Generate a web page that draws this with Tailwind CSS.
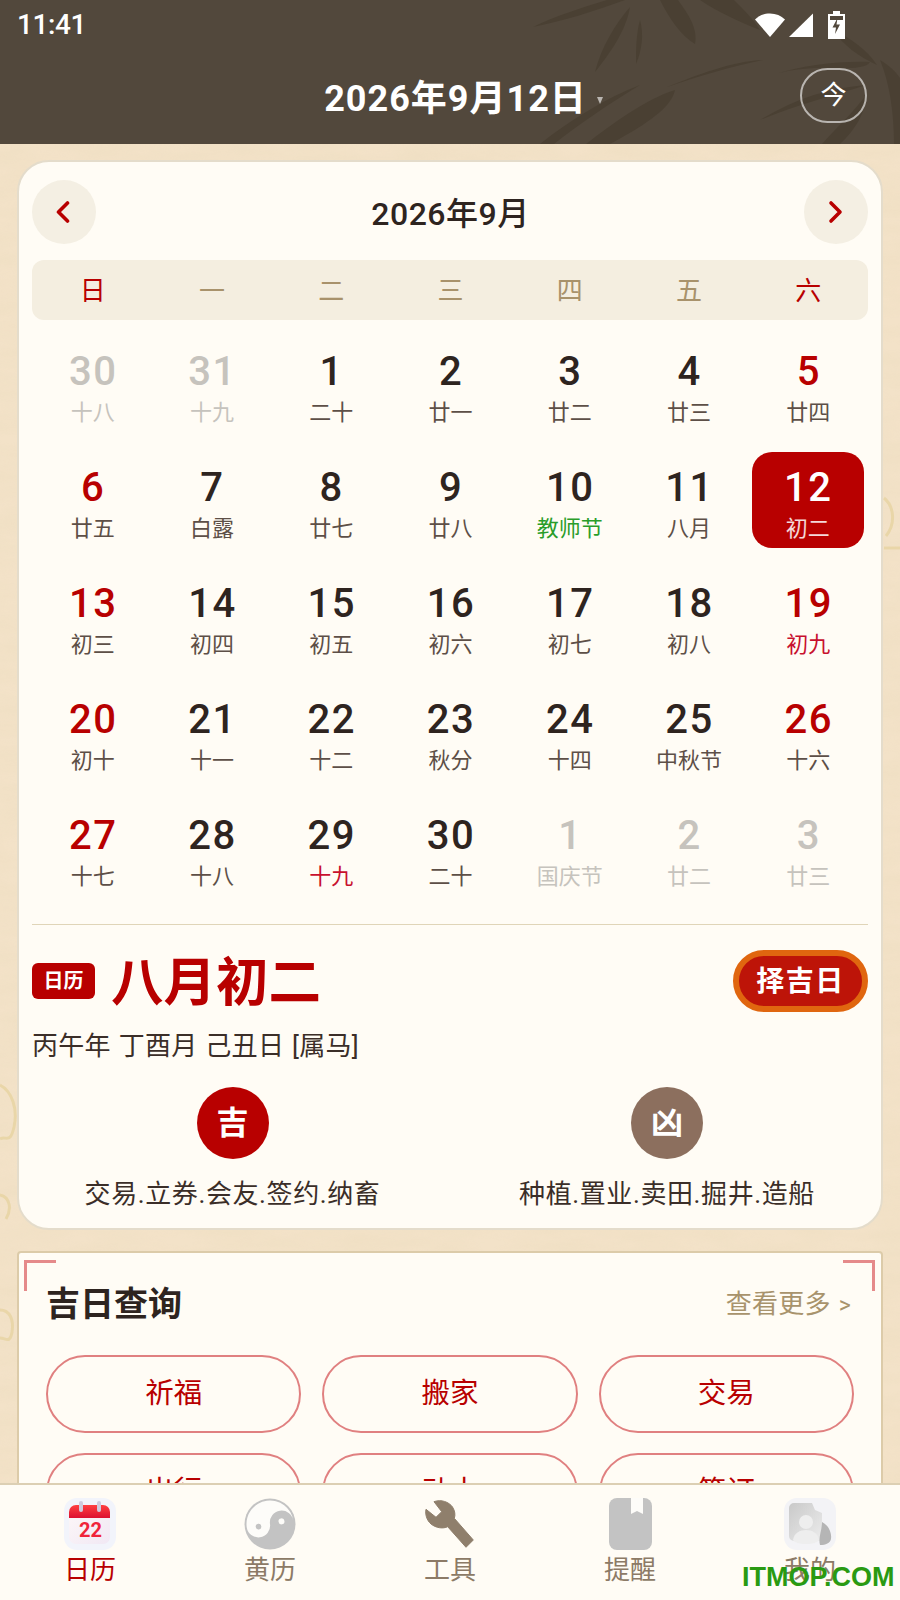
<!DOCTYPE html>
<html lang="zh">
<head>
  <meta charset="UTF-8" />
  <meta name="viewport" content="width=device-width, initial-scale=1.0"/>
  <title>日历</title>
  <script src="https://cdn.jsdelivr.net/npm/@tailwindcss/browser@4"></script>
</head>
<body class="font-['Roboto','Noto_Sans_CJK_SC',sans-serif]">
  <div class="relative w-[900px] h-[1600px] overflow-hidden bg-[#f3e2c8]">

    <!-- paper texture behind the page -->
    <svg class="absolute inset-0" width="900" height="1600" viewBox="0 0 900 1600">
      <filter id="paper"><feTurbulence type="fractalNoise" baseFrequency="0.015 0.06" numOctaves="4" seed="7"/><feColorMatrix values="0 0 0 0 0.84  0 0 0 0 0.72  0 0 0 0 0.52  0 0 0 1.100 -0.25"/></filter>
      <rect width="900" height="1600" filter="url(#paper)" opacity="0.6"/>
      <g fill="none" stroke="#e6d29c" stroke-width="3" opacity="0.7">
        <path d="M0 1085c12 6 18 24 14 42s-8 8-14 12"/>
        <path d="M0 1195c10 2 12 14 6 24"/>
        <path d="M0 1310c10 0 14 10 12 22s-6 6-12 6"/>
        <path d="M884 498c10 8 12 26 2 38"/>
        <path d="M884 548h16"/>
      </g>
    </svg>

    <!-- header -->
    <header class="relative h-[144px] bg-[#52483c] overflow-hidden">
      <svg class="absolute inset-0" width="900" height="144" viewBox="0 0 900 144">
        <g fill="#4a4033">
          <path d="M660 0h18c10 14 20 28 17 44-14-8-26-26-35-44z"/>
          <path d="M630 7c-4 24-20 46-35 65 6-24 20-48 35-65z"/>
          <path d="M533 27c30-6 62-16 92-27h-18c-26 8-52 16-74 27z"/>
          <path d="M640 20c4 14 2 30-4 44 0-14 0-30 4-44z"/>
          <path d="M667 87c30-12 66-26 96-27-30 6-64 16-96 27z"/>
          <path d="M675 90c-4 20-36 38-65 54h-24c26-20 58-44 89-54z"/>
          <path d="M540 144c30-24 66-46 100-59-30 18-62 40-86 59z"/>
          <path d="M773 75c30-10 66-14 97-13-4 8-30 6-50 6-16 0-32 2-47 7z"/>
          <path d="M760 120c36-22 70-32 106-35-30 10-70 20-106 35z"/>
          <path d="M700 0h34c10 10 20 20 26 30-20-8-42-18-60-30z"/>
          <path d="M833 30c18 8 34 20 44 35-18-8-34-20-44-35z"/>
          <path d="M880 60c10 6 16 12 20 18v66h-6c0-30-4-60-14-84z"/>
          <path d="M866 95c0 18-12 36-26 49h-18c14-16 32-32 44-49z"/>
        </g>
      </svg>

      <!-- status bar -->
      <div class="relative flex items-center justify-between h-[50px] pl-[17px] pr-[55px] text-white">
        <span class="text-[28px] font-medium tracking-[-0.4px]">11:41</span>
        <div class="flex items-center">
          <svg width="30" height="26" viewBox="0 0 30 26" fill="#fff"><path d="M0 7.500C4 3.500 9 1.500 15 1.500s11 2 15 6L15 25z"/></svg>
          <svg class="ml-[4px]" width="25" height="26" viewBox="0 0 25 26" fill="#fff"><path d="M24 1.500V25H0z"/></svg>
          <svg class="ml-[14px]" width="17" height="28" viewBox="0 0 17 28"><path fill="#fff" d="M5 0h7v3h5v25H0V3h5z"/><path fill="#52483c" d="M2 5h13v4H2z"/><path fill="#52483c" d="M9.500 7 4.500 16.500h3.500L7 23l5-9.500H8.500z"/></svg>
        </div>
      </div>

      <!-- date title -->
      <div class="relative flex items-center justify-center mt-[21px] h-[56px] text-white">
        <span class="text-[36px] font-bold tracking-[1px] ml-[27px]">2026年9月12日</span>
        <span class="ml-[10px] mt-[2px] w-0 h-0 border-x-[3px] border-x-transparent border-t-[7px] border-t-white/60"></span>
        <span class="absolute right-[33px] top-[-3px] w-[67px] h-[55px] rounded-full border-2 border-white/60 flex items-center justify-center text-[26px]">今</span>
      </div>
    </header>

    <main class="relative px-[17px]">
      <!-- calendar card -->
      <section class="mt-[16px] h-[1070px] rounded-[32px] bg-[#fffcf5] border-2 border-[#e4dccb] px-[13px] pt-[18px]">
        <div class="flex items-center justify-between">
          <button class="w-[64px] h-[64px] rounded-full bg-[#f4efe3] flex items-center justify-center">
            <svg width="16" height="24" viewBox="0 0 16 24" fill="none" stroke="#b80000" stroke-width="3.600" stroke-linecap="round" stroke-linejoin="round"><path d="M11.500 3 2.500 12l9 9"/></svg>
          </button>
          <h2 class="pt-[4px] ml-[1px] text-[32px] font-medium text-[#2e241f] tracking-[0.5px]">2026年9月</h2>
          <button class="w-[64px] h-[64px] rounded-full bg-[#f4efe3] flex items-center justify-center">
            <svg width="16" height="24" viewBox="0 0 16 24" fill="none" stroke="#b80000" stroke-width="3.600" stroke-linecap="round" stroke-linejoin="round"><path d="m3 3 9 9-9 9"/></svg>
          </button>
        </div>

        <div class="grid grid-cols-7 h-[60px] mt-[16px] pt-[2px] pl-[1px] items-center text-center rounded-[12px] bg-[#f4eee0] text-[26px] text-[#a8926b]">
          <span class="text-[#b80000]">日</span><span>一</span><span>二</span><span>三</span><span>四</span><span>五</span><span class="text-[#b80000]">六</span>
        </div>

        <div class="grid grid-cols-7 auto-rows-[96px] gap-y-[20px] mt-[16px] pl-[1px] text-center text-[#2e241f]">
          <div class="flex flex-col items-center pt-[12px] text-[#c6c3bd]"><b class="ml-[1px] text-[40px] leading-[48px] font-medium tracking-[1.500px]">30</b><span class="mt-[2px] text-[22px] leading-[30px]">十八</span></div>
          <div class="flex flex-col items-center pt-[12px] text-[#c6c3bd]"><b class="ml-[1px] text-[40px] leading-[48px] font-medium tracking-[1.500px]">31</b><span class="mt-[2px] text-[22px] leading-[30px]">十九</span></div>
          <div class="flex flex-col items-center pt-[12px]"><b class="ml-[1px] text-[40px] leading-[48px] font-medium tracking-[1.500px]">1</b><span class="mt-[2px] text-[22px] leading-[30px] text-[#5d4f47]">二十</span></div>
          <div class="flex flex-col items-center pt-[12px]"><b class="ml-[1px] text-[40px] leading-[48px] font-medium tracking-[1.500px]">2</b><span class="mt-[2px] text-[22px] leading-[30px] text-[#5d4f47]">廿一</span></div>
          <div class="flex flex-col items-center pt-[12px]"><b class="ml-[1px] text-[40px] leading-[48px] font-medium tracking-[1.500px]">3</b><span class="mt-[2px] text-[22px] leading-[30px] text-[#5d4f47]">廿二</span></div>
          <div class="flex flex-col items-center pt-[12px]"><b class="ml-[1px] text-[40px] leading-[48px] font-medium tracking-[1.500px]">4</b><span class="mt-[2px] text-[22px] leading-[30px] text-[#5d4f47]">廿三</span></div>
          <div class="flex flex-col items-center pt-[12px]"><b class="ml-[1px] text-[40px] leading-[48px] font-medium tracking-[1.500px] text-[#b80000]">5</b><span class="mt-[2px] text-[22px] leading-[30px] text-[#5d4f47]">廿四</span></div>

          <div class="flex flex-col items-center pt-[12px]"><b class="ml-[1px] text-[40px] leading-[48px] font-medium tracking-[1.500px] text-[#b80000]">6</b><span class="mt-[2px] text-[22px] leading-[30px] text-[#5d4f47]">廿五</span></div>
          <div class="flex flex-col items-center pt-[12px]"><b class="ml-[1px] text-[40px] leading-[48px] font-medium tracking-[1.500px]">7</b><span class="mt-[2px] text-[22px] leading-[30px] text-[#5d4f47]">白露</span></div>
          <div class="flex flex-col items-center pt-[12px]"><b class="ml-[1px] text-[40px] leading-[48px] font-medium tracking-[1.500px]">8</b><span class="mt-[2px] text-[22px] leading-[30px] text-[#5d4f47]">廿七</span></div>
          <div class="flex flex-col items-center pt-[12px]"><b class="ml-[1px] text-[40px] leading-[48px] font-medium tracking-[1.500px]">9</b><span class="mt-[2px] text-[22px] leading-[30px] text-[#5d4f47]">廿八</span></div>
          <div class="flex flex-col items-center pt-[12px]"><b class="ml-[1px] text-[40px] leading-[48px] font-medium tracking-[1.500px]">10</b><span class="mt-[2px] text-[22px] leading-[30px] text-[#2a9d2a]">教师节</span></div>
          <div class="flex flex-col items-center pt-[12px]"><b class="ml-[1px] text-[40px] leading-[48px] font-medium tracking-[1.500px]">11</b><span class="mt-[2px] text-[22px] leading-[30px] text-[#5d4f47]">八月</span></div>
          <div class="flex flex-col items-center pt-[12px] ml-[3px] mr-[4px] rounded-[20px] bg-[#b80000] text-white"><b class="ml-[1px] text-[40px] leading-[48px] font-medium tracking-[1.500px]">12</b><span class="mt-[2px] text-[22px] leading-[30px] text-white/85">初二</span></div>

          <div class="flex flex-col items-center pt-[12px]"><b class="ml-[1px] text-[40px] leading-[48px] font-medium tracking-[1.500px] text-[#b80000]">13</b><span class="mt-[2px] text-[22px] leading-[30px] text-[#5d4f47]">初三</span></div>
          <div class="flex flex-col items-center pt-[12px]"><b class="ml-[1px] text-[40px] leading-[48px] font-medium tracking-[1.500px]">14</b><span class="mt-[2px] text-[22px] leading-[30px] text-[#5d4f47]">初四</span></div>
          <div class="flex flex-col items-center pt-[12px]"><b class="ml-[1px] text-[40px] leading-[48px] font-medium tracking-[1.500px]">15</b><span class="mt-[2px] text-[22px] leading-[30px] text-[#5d4f47]">初五</span></div>
          <div class="flex flex-col items-center pt-[12px]"><b class="ml-[1px] text-[40px] leading-[48px] font-medium tracking-[1.500px]">16</b><span class="mt-[2px] text-[22px] leading-[30px] text-[#5d4f47]">初六</span></div>
          <div class="flex flex-col items-center pt-[12px]"><b class="ml-[1px] text-[40px] leading-[48px] font-medium tracking-[1.500px]">17</b><span class="mt-[2px] text-[22px] leading-[30px] text-[#5d4f47]">初七</span></div>
          <div class="flex flex-col items-center pt-[12px]"><b class="ml-[1px] text-[40px] leading-[48px] font-medium tracking-[1.500px]">18</b><span class="mt-[2px] text-[22px] leading-[30px] text-[#5d4f47]">初八</span></div>
          <div class="flex flex-col items-center pt-[12px]"><b class="ml-[1px] text-[40px] leading-[48px] font-medium tracking-[1.500px] text-[#b80000]">19</b><span class="mt-[2px] text-[22px] leading-[30px] text-[#c8102e]">初九</span></div>

          <div class="flex flex-col items-center pt-[12px]"><b class="ml-[1px] text-[40px] leading-[48px] font-medium tracking-[1.500px] text-[#b80000]">20</b><span class="mt-[2px] text-[22px] leading-[30px] text-[#5d4f47]">初十</span></div>
          <div class="flex flex-col items-center pt-[12px]"><b class="ml-[1px] text-[40px] leading-[48px] font-medium tracking-[1.500px]">21</b><span class="mt-[2px] text-[22px] leading-[30px] text-[#5d4f47]">十一</span></div>
          <div class="flex flex-col items-center pt-[12px]"><b class="ml-[1px] text-[40px] leading-[48px] font-medium tracking-[1.500px]">22</b><span class="mt-[2px] text-[22px] leading-[30px] text-[#5d4f47]">十二</span></div>
          <div class="flex flex-col items-center pt-[12px]"><b class="ml-[1px] text-[40px] leading-[48px] font-medium tracking-[1.500px]">23</b><span class="mt-[2px] text-[22px] leading-[30px] text-[#5d4f47]">秋分</span></div>
          <div class="flex flex-col items-center pt-[12px]"><b class="ml-[1px] text-[40px] leading-[48px] font-medium tracking-[1.500px]">24</b><span class="mt-[2px] text-[22px] leading-[30px] text-[#5d4f47]">十四</span></div>
          <div class="flex flex-col items-center pt-[12px]"><b class="ml-[1px] text-[40px] leading-[48px] font-medium tracking-[1.500px]">25</b><span class="mt-[2px] text-[22px] leading-[30px] text-[#5d4f47]">中秋节</span></div>
          <div class="flex flex-col items-center pt-[12px]"><b class="ml-[1px] text-[40px] leading-[48px] font-medium tracking-[1.500px] text-[#b80000]">26</b><span class="mt-[2px] text-[22px] leading-[30px] text-[#5d4f47]">十六</span></div>

          <div class="flex flex-col items-center pt-[12px]"><b class="ml-[1px] text-[40px] leading-[48px] font-medium tracking-[1.500px] text-[#b80000]">27</b><span class="mt-[2px] text-[22px] leading-[30px] text-[#5d4f47]">十七</span></div>
          <div class="flex flex-col items-center pt-[12px]"><b class="ml-[1px] text-[40px] leading-[48px] font-medium tracking-[1.500px]">28</b><span class="mt-[2px] text-[22px] leading-[30px] text-[#5d4f47]">十八</span></div>
          <div class="flex flex-col items-center pt-[12px]"><b class="ml-[1px] text-[40px] leading-[48px] font-medium tracking-[1.500px]">29</b><span class="mt-[2px] text-[22px] leading-[30px] text-[#c8102e]">十九</span></div>
          <div class="flex flex-col items-center pt-[12px]"><b class="ml-[1px] text-[40px] leading-[48px] font-medium tracking-[1.500px]">30</b><span class="mt-[2px] text-[22px] leading-[30px] text-[#5d4f47]">二十</span></div>
          <div class="flex flex-col items-center pt-[12px] text-[#c6c3bd]"><b class="ml-[1px] text-[40px] leading-[48px] font-medium tracking-[1.500px]">1</b><span class="mt-[2px] text-[22px] leading-[30px]">国庆节</span></div>
          <div class="flex flex-col items-center pt-[12px] text-[#c6c3bd]"><b class="ml-[1px] text-[40px] leading-[48px] font-medium tracking-[1.500px]">2</b><span class="mt-[2px] text-[22px] leading-[30px]">廿二</span></div>
          <div class="flex flex-col items-center pt-[12px] text-[#c6c3bd]"><b class="ml-[1px] text-[40px] leading-[48px] font-medium tracking-[1.500px]">3</b><span class="mt-[2px] text-[22px] leading-[30px]">廿三</span></div>
        </div>

        <div class="mt-[28px] h-[1px] bg-[#e0d5b8]"></div>

        <!-- today's summary -->
        <div class="flex items-center mt-[24px] h-[64px]">
          <span class="w-[63px] h-[36px] mt-[-1px] rounded-[6px] bg-[#b80000] text-white text-[20px] font-bold flex items-center justify-center">日历</span>
          <h3 class="ml-[16px] pt-[4px] text-[52.500px] font-bold text-[#b80000]">八月初二</h3>
          <button class="ml-auto w-[135px] h-[62px] pt-[1px] rounded-full border-[6px] border-[#e0660f] bg-[#bd1408] text-white text-[28px] font-bold tracking-[1.500px]">择吉日</button>
        </div>
        <p class="mt-[15px] text-[26px] leading-[36px] tracking-[0.3px] [word-spacing:1px] text-[#3b2e28]">丙午年 丁酉月 己丑日 [属马]</p>
        <div class="grid grid-cols-2 mt-[23px]">
          <div class="flex flex-col items-center mr-[17px]">
            <span class="w-[72px] h-[72px] rounded-full bg-[#b80000] text-white text-[32px] font-bold flex items-center justify-center">吉</span>
            <span class="mt-[17px] text-[26px] leading-[36px] tracking-[0.6px] whitespace-nowrap text-[#3b2e28]">交易.立券.会友.签约.纳畜</span>
          </div>
          <div class="flex flex-col items-center ml-[16px]">
            <span class="w-[72px] h-[72px] rounded-full bg-[#8c6f5e] text-white text-[32px] font-bold flex items-center justify-center">凶</span>
            <span class="mt-[17px] text-[26px] leading-[36px] tracking-[0.6px] whitespace-nowrap text-[#3b2e28]">种植.置业.卖田.掘井.造船</span>
          </div>
        </div>
      </section>

      <!-- auspicious day lookup -->
      <section class="relative mt-[21px] h-[400px] rounded-[4px] bg-[#fffcf5] border-2 border-[#dccba9] px-[27px]">
        <span class="absolute left-[5px] top-[7px] w-[32px] h-[31px] border-l-[3px] border-t-[3px] border-[#e58a8a]"></span>
        <span class="absolute right-[6px] top-[7px] w-[32px] h-[31px] border-r-[3px] border-t-[3px] border-[#e58a8a]"></span>
        <div class="flex items-center justify-between pt-[26px] h-[77px] pr-[3px]">
          <h3 class="text-[34px] font-bold text-[#2e241f]">吉日查询</h3>
          <span class="text-[26px] text-[#a8936c] tracking-[0.3px]">查看更多 <span class="ml-[1px] text-[23px]">&gt;</span></span>
        </div>
        <div class="grid grid-cols-3 gap-x-[21px] gap-y-[20px] mt-[25px] w-[808px] text-center text-[28.500px] text-[#b80000]">
          <button class="h-[78px] pt-[1px] rounded-full border-2 border-[#e08080]">祈福</button>
          <button class="h-[78px] pt-[1px] rounded-full border-2 border-[#e08080]">搬家</button>
          <button class="h-[78px] pt-[1px] rounded-full border-2 border-[#e08080]">交易</button>
          <button class="h-[78px] pt-[1px] rounded-full border-2 border-[#e08080]">出行</button>
          <button class="h-[78px] pt-[1px] rounded-full border-2 border-[#e08080]">动土</button>
          <button class="h-[78px] pt-[1px] rounded-full border-2 border-[#e08080]">签订</button>
        </div>
      </section>
    </main>

    <!-- bottom nav -->
    <nav class="absolute left-0 right-0 bottom-0 h-[117px] grid grid-cols-5 bg-[#fffcf5] border-t-2 border-[#dccfb3] text-[26px] leading-[36px] text-[#8c7a66] text-center">
      <a class="flex flex-col items-center pt-[13px] text-[#b80000]">
        <svg width="52" height="52" viewBox="0 0 52 52">
          <defs>
            <linearGradient id="calTop" x1="0" y1="0" x2="0" y2="1"><stop offset="0" stop-color="#ff4040"/><stop offset="1" stop-color="#dc1030"/></linearGradient>
            <linearGradient id="calBody" x1="0" y1="0" x2="1" y2="1"><stop offset="0" stop-color="#fdf8f8"/><stop offset="1" stop-color="#f1e8f4"/></linearGradient>
          </defs>
          <rect width="52" height="52" rx="13" fill="#f2f4fb"/>
          <rect x="5" y="8" width="41" height="38" rx="7" fill="url(#calBody)"/>
          <path d="M5 20v-6a7 7 0 0 1 7-7h27a7 7 0 0 1 7 7v6z" fill="url(#calTop)"/>
          <rect x="15" y="3" width="4" height="11" rx="2" fill="#cfcbdd"/>
          <rect x="33" y="3" width="4" height="11" rx="2" fill="#cfcbdd"/>
          <text x="26.500" y="39" text-anchor="middle" font-size="20" font-weight="700" fill="#f0243a" font-family="Roboto">22</text>
        </svg>
        <span class="mt-[2px]">日历</span>
      </a>
      <a class="flex flex-col items-center pt-[13px]">
        <svg width="52" height="52" viewBox="0 0 52 52">
          <circle cx="26" cy="26" r="25.500" fill="#c3c3c3"/>
          <g transform="translate(26 26) rotate(-8)">
            <path d="M-23.500 0A23.500 23.500 0 0 1 23.500 0A11.750 11.750 0 0 0 0 0A11.750 11.750 0 0 1-23.500 0z" fill="#fdfcf9"/>
            <circle cx="-11.750" cy="1" r="2.800" fill="#c3c3c3"/>
            <circle cx="11.750" cy="-1" r="3" fill="#fdfcf9"/>
          </g>
        </svg>
        <span class="mt-[2px]">黄历</span>
      </a>
      <a class="flex flex-col items-center pt-[13px]">
        <svg width="52" height="52" viewBox="0 0 52 52">
          <path d="M10 3.700C17 1 25 4 28.500 9 31 13 31.500 17 30.300 20.300L49.300 42 42 49.300 23.700 28.700C19 31 12 30 7 26 2.500 22 1 16 2 11.300L12 19.300 17.700 13.700z" fill="#8f7f6c" stroke="#8f7f6c" stroke-linejoin="round"/>
        </svg>
        <span class="mt-[2px]">工具</span>
      </a>
      <a class="flex flex-col items-center pt-[13px]">
        <svg width="52" height="52" viewBox="0 0 52 52">
          <rect x="5" width="43" height="52" rx="8" fill="#c3c3c3"/>
          <path d="M27 0h12v16l-6-3-6 3z" fill="#fdfcf9"/>
        </svg>
        <span class="mt-[2px]">提醒</span>
      </a>
      <a class="flex flex-col items-center pt-[13px]">
        <svg width="52" height="52" viewBox="0 0 52 52">
          <defs>
            <linearGradient id="meCard" x1="0" y1="0" x2="1" y2="1"><stop offset="0" stop-color="#c9c9c9"/><stop offset="1" stop-color="#ececec"/></linearGradient>
          </defs>
          <rect width="52" height="52" rx="13" fill="#f3f3f6"/>
          <path d="M10 5h18l3 7 7 3v24a4 4 0 0 1-4 4H10a5 5 0 0 1-5-5V10a5 5 0 0 1 5-5z" fill="url(#meCard)"/>
          <path d="M38 24c6 3 10 10 9 17-1 4-5 6-11 6-2-8 2-14 2-23z" fill="#b5b5b5"/>
          <circle cx="22" cy="24" r="7" fill="#eeeeee"/>
          <path d="M9 42c1-7 7-10 13-10s12 3 13 10c-2 3-7 4-13 4s-11-1-13-4z" fill="#eeeeee"/>
        </svg>
        <span class="mt-[2px]">我的</span>
      </a>
    </nav>
    <span class="absolute left-[742px] top-[1563px] font-['Liberation_Sans'] text-[27px] leading-[28px] font-bold text-[#2a9a12]">ITMOP.COM</span>
  </div>
</body>
</html>
